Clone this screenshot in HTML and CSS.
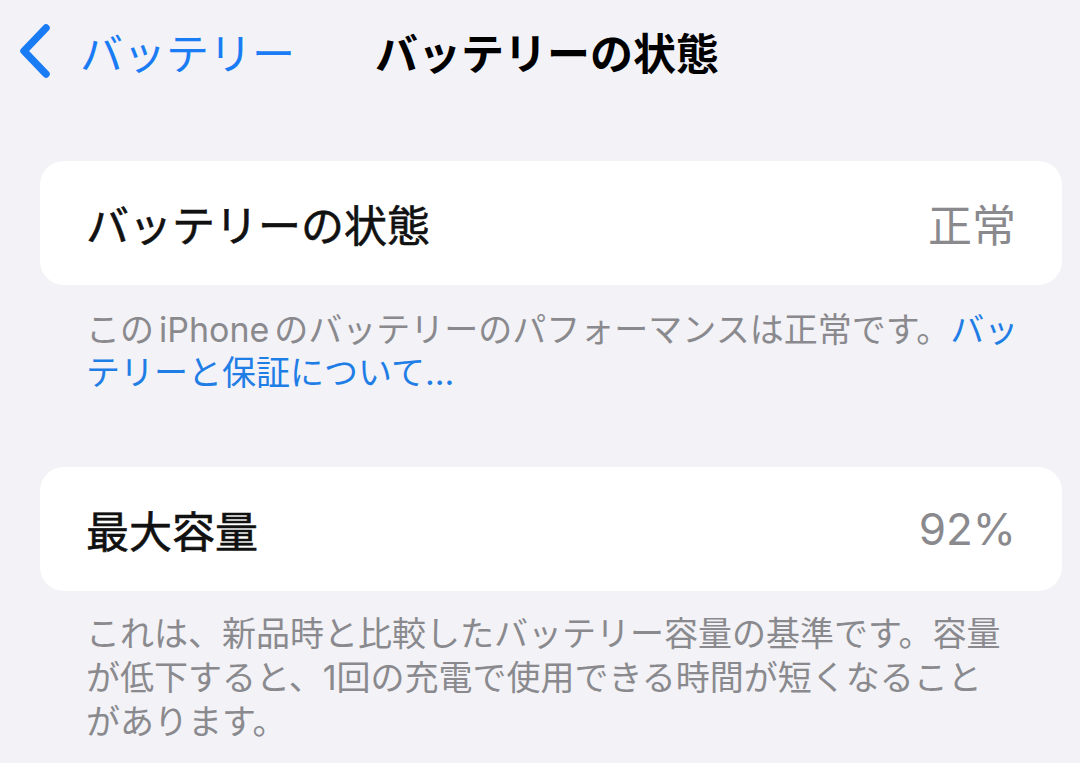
FILE: index.html
```html
<!DOCTYPE html>
<html lang="ja">
<head>
    <meta charset="UTF-8">
    <meta name="viewport" content="width=device-width, initial-scale=1.0">
    <title>バッテリーの状態</title>
    <link rel="stylesheet" href="styles.css">
</head>
<body>
    <div class="nav">
        <a class="back" href="#">
            <svg class="chevron" width="32" height="54" viewBox="0 0 32 54">
                <path d="M27 4 L5 27 L27 50" fill="none" stroke="currentColor" stroke-width="7.5" stroke-linecap="round" stroke-linejoin="round"/>
            </svg>
            <span class="back-label">バッテリー</span>
        </a>
        <div class="nav-title">バッテリーの状態</div>
    </div>

    <div class="group first">
        <div class="row">
            <span class="row-label">バッテリーの状態</span>
            <span class="row-value">正常</span>
        </div>
    </div>
    <p class="footnote">この<span class="latin">iPhone</span>のバッテリーのパフォーマンスは正常です。<a class="link" href="#">バッ<br>テリーと保証について...</a></p>

    <div class="group second">
        <div class="row">
            <span class="row-label">最大容量</span>
            <span class="row-value">92%</span>
        </div>
    </div>
    <p class="footnote second-note">これは、新品時と比較したバッテリー容量の基準です。容量<br>が低下すると、1回の充電で使用できる時間が短くなること<br>があります。</p>
</body>
</html>
```

FILE: styles.css
```css
body {
    margin: 0;
    background-color: #f2f2f7;
    font-family: Inter, "Noto Sans CJK JP", sans-serif;
    color: #000;
}
.nav {
    display: flex;
    align-items: center;
    height: 102px;
    padding-left: 19px;
}
.back {
    display: flex;
    align-items: center;
    color: #1a7cf4;
    text-decoration: none;
}
.chevron {
    display: block;
}
.back-label {
    margin-left: 29px;
    font-size: 43px;
}
.nav-title {
    margin-left: 80px;
    font-size: 43px;
    font-weight: 700;
}
.group {
    margin: 0 18px 0 40px;
    background-color: #fff;
    border-radius: 24px;
}
.group.first {
    margin-top: 59px;
}
.group.second {
    margin-top: 73px;
}
.row {
    display: flex;
    justify-content: space-between;
    align-items: center;
    height: 124px;
    padding: 0 46px;
    font-size: 43px;
}
.row-label {
    font-weight: 400;
    color: #111;
    -webkit-text-stroke: 0.6px #111; /* medium weight isn't installed */
}
.row-value {
    color: #8a8a8e;
    font-size: 44px;
}
.footnote {
    margin: 0;
    padding: 23px 0 0 86px;
    font-size: 34px;
    line-height: 43px;
    color: #8a8a8e;
}
.second-note {
    padding-top: 21px;
    line-height: 44px;
}
.latin {
    margin: 0 5px;
}
.link {
    color: #1f7de6;
    text-decoration: none;
}
```
